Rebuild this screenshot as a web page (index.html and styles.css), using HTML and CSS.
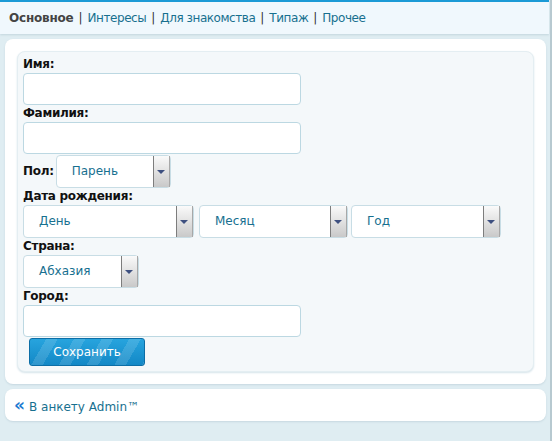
FILE: index.html
```html
<!DOCTYPE html>
<html lang="ru">
<head>
<meta charset="utf-8">
<title>Анкета</title>
<link rel="stylesheet" href="styles.css">
</head>
<body>
<div class="page">
  <div class="topbar">
    <b class="cur">Основное</b><span class="sep">|</span><a href="#">Интересы</a><span class="sep">|</span><a href="#">Для знакомства</a><span class="sep">|</span><a href="#">Типаж</a><span class="sep">|</span><a href="#">Прочее</a>
  </div>
  <div class="card">
    <div class="panel">
      <div class="label">Имя:</div>
      <div class="input w277"></div>
      <div class="label">Фамилия:</div>
      <div class="input w277"></div>
      <div class="row inline">
        <span class="label">Пол:</span>
        <div class="select w115"><span>Парень</span></div>
      </div>
      <div class="label">Дата рождения:</div>
      <div class="row dates">
        <div class="select w171"><span>День</span></div>
        <div class="select w149"><span>Месяц</span></div>
        <div class="select w150"><span>Год</span></div>
      </div>
      <div class="label">Страна:</div>
      <div class="select w116"><span>Абхазия</span></div>
      <div class="label">Город:</div>
      <div class="input w277"></div>
      <button class="btn">Сохранить</button>
    </div>
  </div>
  <div class="card foot">
    <span class="raquo">«</span><a href="#">В анкету Admin™</a>
  </div>
</div>
</body>
</html>
```
FILE: styles.css
```css
html, body { margin: 0; padding: 0; }
body {
  background: #dfedf2;
  font-family: Tahoma, "DejaVu Sans", Verdana, sans-serif;
  font-size: 12px;
  color: #111;
  height: 441px;
  overflow: hidden;
}
.page {
  border-right: 2px solid #b7c9d0;
  height: 441px;
  box-sizing: border-box;
}
a { color: #17708f; text-decoration: none; }
.topbar {
  border-top: 2px solid #1b9ad6;
  background: #f0f8fd;
  height: 32px;
  line-height: 32px;
  padding-left: 9px;
  margin-right: 1px;
  box-shadow: 0 1px 2px #c4d6de;
  font-size: 12px;
}
.topbar a { letter-spacing: -0.45px; }
.topbar .cur { color: #444; letter-spacing: -0.2px; }
.topbar .sep { color: #333; margin: 0 5px; }
.card {
  background: #fff;
  margin: 5px 4px 0 5px;
  border-radius: 8px;
  padding: 12px;
  box-shadow: 0 1px 2px #c6d8e0;
}
.panel {
  background: #f4f8fa;
  border: 1px solid #e4eef2;
  border-radius: 8px;
  padding: 4px 5px 5px;
  box-shadow: 0 1px 2px #d6e4ea;
}
.label {
  font-weight: bold;
  line-height: 17px;
  height: 17px;
  letter-spacing: -0.3px;
}
.input {
  height: 32px;
  box-sizing: border-box;
  background: #fff;
  border: 1px solid #bcd8e2;
  border-radius: 4px;
}
.w277 { width: 278px; }
.w115 { width: 115px; }
.w171 { width: 171px; }
.w149 { width: 149px; }
.w150 { width: 150px; }
.w116 { width: 116px; }
.row { display: flex; align-items: center; }
.inline { gap: 2px; margin: 1px 0 0; }
.dates { gap: 5px; }
.dates .w149 { margin-right: -2px; }
.select {
  position: relative;
  height: 33px;
  box-sizing: border-box;
  background: #fff;
  border: 1px solid #c8dde5;
  border-radius: 4px;
  line-height: 31px;
  padding-left: 15px;
  color: #17708f;
  flex: none;
}
.select::after {
  content: "";
  position: absolute;
  right: 0;
  top: 0;
  bottom: 0;
  width: 15px;
  border-left: 1px solid #7d7d7d;
  border-right: 1px solid #a8a8a8;
  background: linear-gradient(#fafafa, #c9c9c9);
}
.select::before {
  content: "";
  position: absolute;
  right: 5px;
  top: 14px;
  border-left: 4px solid transparent;
  border-right: 4px solid transparent;
  border-top: 4px solid #3e5080;
  z-index: 1;
}
.btn {
  display: block;
  margin: 1px 0 0 6px;
  width: 116px;
  height: 28px;
  border: 1px solid #0c6ea6;
  border-radius: 3px;
  color: #fff;
  font-family: inherit;
  font-size: 12px;
  background:
    repeating-linear-gradient(120deg, rgba(255,255,255,0) 0 14px, rgba(255,255,255,0.13) 14px 24px),
    linear-gradient(#27a4de, #1388c6);
  padding: 0;
}
.foot {
  padding: 0 9px;
  height: 32px;
  line-height: 32px;
  margin-top: 5px;
}
.raquo {
  color: #1a78d0;
  font-weight: bold;
  font-size: 17px;
  margin-right: 4px;
}
```
